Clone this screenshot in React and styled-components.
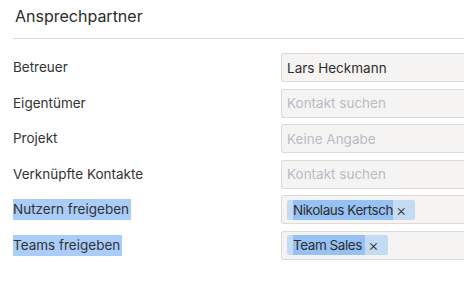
import React from 'react'
import styled, { createGlobalStyle } from 'styled-components'

const GlobalStyle = createGlobalStyle`
  html, body {
    margin: 0;
    padding: 0;
    background: #ffffff;
    overflow: hidden;
  }
  body {
    font-family: Inter, "Noto Sans", sans-serif;
    color: #333333;
  }
`

const rows = [
  { label: 'Betreuer', value: 'Lars Heckmann' },
  { label: 'Eigentümer', placeholder: 'Kontakt suchen' },
  { label: 'Projekt', placeholder: 'Keine Angabe' },
  { label: 'Verknüpfte Kontakte', placeholder: 'Kontakt suchen' },
  { label: 'Nutzern freigeben', tag: 'Nikolaus Kertsch', selected: true },
  { label: 'Teams freigeben', tag: 'Team Sales ', selected: true },
]

const App = () => (
  <Page>
    <GlobalStyle />
    <Title>Ansprechpartner</Title>
    <Divider />
    <Form>
      {rows.map(row => (
        <React.Fragment key={row.label}>
          <Label>
            <LabelText selected={row.selected}>{row.label}</LabelText>
          </Label>
          <Field>
            {row.value && <Value>{row.value}</Value>}
            {row.placeholder && <Placeholder>{row.placeholder}</Placeholder>}
            {row.tag && (
              <Tag>
                <TagText>{row.tag}</TagText>
                <Remove>×</Remove>
              </Tag>
            )}
          </Field>
        </React.Fragment>
      ))}
    </Form>
  </Page>
)

export default App

const Page = styled.div`
  padding: 0 0 0 13px;
`

const Title = styled.h2`
  margin: 0;
  padding: 6px 0 0 2px;
  height: 32px;
  box-sizing: border-box;
  font-size: 16px;
  font-weight: 400;
  line-height: 20px;
  color: #2b2b2b;
`

const Divider = styled.div`
  height: 1px;
  background: #dcdcdc;
  margin-top: 6px;
`

const Form = styled.div`
  display: grid;
  grid-template-columns: 268px 1fr;
  grid-auto-rows: 29px;
  row-gap: 6.5px;
  margin-top: 14px;
`

const Label = styled.div`
  display: flex;
  align-items: center;
  font-size: 13.5px;
  color: #333333;
`

const LabelText = styled.span`
  line-height: 21px;
  padding-right: ${p => (p.selected ? '2px' : '0')};
  background: ${p => (p.selected ? '#a9cdf8' : 'transparent')};
`

const Field = styled.div`
  display: flex;
  align-items: center;
  box-sizing: border-box;
  padding: 0 5px;
  background: #f5f4f3;
  border: 1px solid #dadada;
  border-right: none;
  border-radius: 3px 0 0 3px;
  font-size: 13.5px;
`

const Value = styled.span`
  color: #2e2e2e;
`

const Placeholder = styled.span`
  color: #b9bcc4;
`

const Tag = styled.span`
  display: inline-flex;
  align-items: center;
  height: 20px;
  padding: 0 9px 0 6px;
  background: #c4dbf4;
  border-radius: 2px;
  color: #2e2e2e;
  font-size: 13.5px;
`

const TagText = styled.span`
  line-height: 20px;
  letter-spacing: -0.45px;
  background: #96c1f3;
  white-space: pre;
`

const Remove = styled.span`
  margin-left: 3px;
  font-size: 16px;
  font-weight: 300;
  line-height: 20px;
  color: #333333;
`
